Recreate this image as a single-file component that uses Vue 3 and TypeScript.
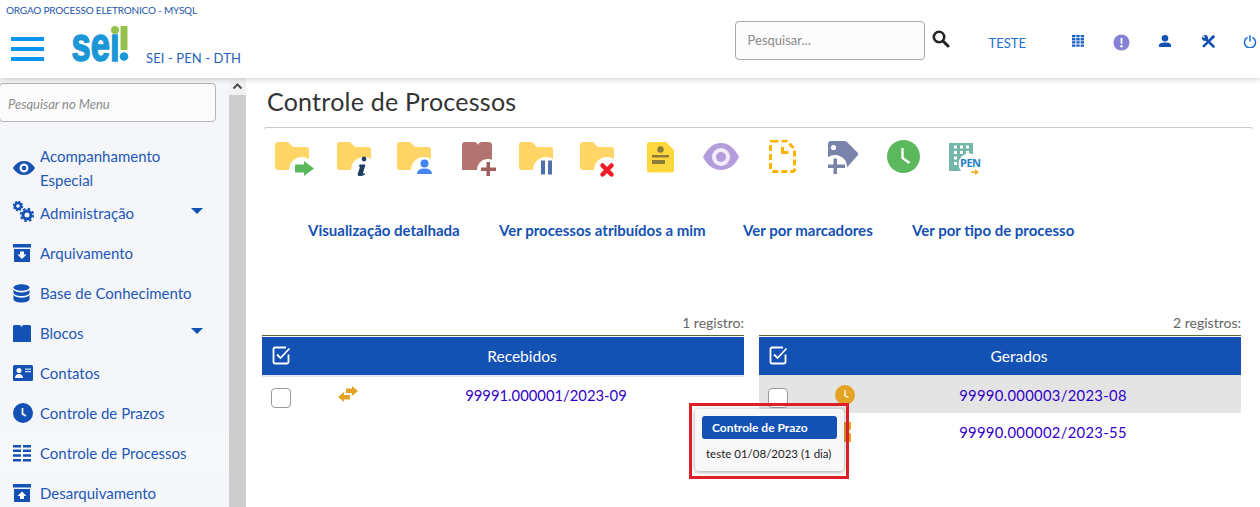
<script setup lang="ts">
interface MenuItem {
  label: string
  icon: string
  caret?: boolean
  active?: boolean
}

const menu: MenuItem[] = [
  { label: 'Administração', icon: 'gears', caret: true },
  { label: 'Arquivamento', icon: 'archive' },
  { label: 'Base de Conhecimento', icon: 'db' },
  { label: 'Blocos', icon: 'blocks', caret: true },
  { label: 'Contatos', icon: 'card' },
  { label: 'Controle de Prazos', icon: 'clock' },
  { label: 'Controle de Processos', icon: 'list', active: true },
  { label: 'Desarquivamento', icon: 'unarchive' }
]

const links = [
  { label: 'Visualização detalhada', width: 191 },
  { label: 'Ver processos atribuídos a mim', width: 244 },
  { label: 'Ver por marcadores', width: 169 },
  { label: 'Ver por tipo de processo', width: 200 }
]
</script>

<template>
  <div class="page">
    <header class="topbar">
      <div class="org">ORGAO PROCESSO ELETRONICO - MYSQL</div>
      <div class="bar">
        <button class="burger" aria-label="menu"><i /><i /><i /></button>
        <svg class="logo" width="58" height="44" viewBox="0 0 58 44">
          <text x="0.500" y="36.500" class="logo-text" textLength="48" lengthAdjust="spacingAndGlyphs">seı</text>
          <circle cx="44" cy="6" r="4" fill="#96c04c" />
          <rect x="49.500" y="2" width="7" height="24" fill="#96c04c" />
          <circle cx="53" cy="32.500" r="4.300" fill="#1b96d6" />
        </svg>
        <span class="sysname">SEI - PEN - DTH</span>

        <div class="tools">
          <div class="top-search">Pesquisar...</div>
          <svg class="lens" width="18" height="18" viewBox="0 0 18 18">
            <circle cx="7" cy="7" r="5.200" fill="none" stroke="#222" stroke-width="2.600" />
            <path d="M11 11l5 5" stroke="#222" stroke-width="3" stroke-linecap="round" />
          </svg>
          <span class="user">TESTE</span>
          <svg class="t1" width="12" height="12" viewBox="0 0 12 12">
            <path fill="#1a5fc4" d="M0 0h3.400v2.300H0zM4.300 0h3.400v2.300H4.300zM8.600 0H12v2.300H8.600zM0 3.100h3.400v2.300H0zM4.300 3.100h3.400v2.300H4.300zM8.600 3.100H12v2.300H8.600zM0 6.300h3.400v2.300H0zM4.300 6.300h3.400v2.300H4.300zM8.600 6.300H12v2.300H8.600zM0 9.400h3.400v2.300H0zM4.300 9.400h3.400v2.300H4.300zM8.600 9.400H12v2.300H8.600z" />
          </svg>
          <svg class="t2" width="17" height="17" viewBox="0 0 17 17">
            <circle cx="8.500" cy="8.500" r="8" fill="#8680d6" />
            <path d="M7.500 4h2l-.3 6H7.800z" fill="#fff" />
            <circle cx="8.500" cy="12.300" r="1.200" fill="#fff" />
          </svg>
          <svg class="t3" width="12" height="12" viewBox="0 0 12 12">
            <circle cx="6" cy="3.300" r="3.300" fill="#1351b4" />
            <path d="M0 12v-1.800C0 8.200 2.500 7.400 6 7.400s6 .8 6 2.800V12z" fill="#1351b4" />
          </svg>
          <svg class="t4" width="13" height="13" viewBox="0 0 13 13">
            <path d="M3 3l8.500 8.500" stroke="#1351b4" stroke-width="2.600" stroke-linecap="round" />
            <path d="M1.800 11.200L10 3" stroke="#1351b4" stroke-width="2.600" stroke-linecap="round" />
            <circle cx="3" cy="3" r="3" fill="#1351b4" />
            <path d="M1 0L3 2.200 2 3 0 1z" fill="#fff" />
            <path d="M9 1.500L11.500 0 13 1.500 11.500 4z" fill="#1351b4" />
          </svg>
          <svg class="t5" width="14" height="13" viewBox="0 0 14 13">
            <path d="M4 2.700a5.500 5.500 0 1 0 6 0" fill="none" stroke="#1a6fd4" stroke-width="1.500" stroke-linecap="round" />
            <path d="M7 .8v5.200" stroke="#1a6fd4" stroke-width="1.500" stroke-linecap="round" />
          </svg>
        </div>
      </div>
    </header>

    <div class="content">
      <aside class="side">
        <div class="side-search">Pesquisar no Menu</div>
        <nav class="nav">
          <a class="item first">
            <span class="ico">
              <svg width="22" height="16" viewBox="0 0 22 16">
                <path fill="#1351b4" fill-rule="evenodd" d="M11 1c5 0 9 3.500 11 7-2 3.500-6 7-11 7S2 11.500 0 8c2-3.500 6-7 11-7zm0 2.500a4.500 4.500 0 1 0 0 9 4.500 4.500 0 0 0 0-9zm0 2.300a2.200 2.200 0 1 1 0 4.400 2.200 2.200 0 0 1 0-4.400z" />
              </svg>
            </span>
            <span class="label">Acompanhamento Especial</span>
          </a>
          <a v-for="m in menu" :key="m.label" class="item" :class="{ active: m.active }">
            <span class="ico">
              <svg v-if="m.icon === 'gears'" class="gears" width="21" height="21" viewBox="0 0 21 21">
                <circle cx="5" cy="5" r="3" fill="none" stroke="#1351b4" stroke-width="2.400" />
                <circle cx="5" cy="5" r="4.500" fill="none" stroke="#1351b4" stroke-width="1.400" stroke-dasharray="2 1.500" />
                <circle cx="14" cy="14" r="4" fill="none" stroke="#1351b4" stroke-width="3" />
                <circle cx="14" cy="14" r="6.300" fill="none" stroke="#1351b4" stroke-width="1.800" stroke-dasharray="2.500 2.450" />
              </svg>
              <svg v-else-if="m.icon === 'archive'" width="18" height="18" viewBox="0 0 18 18">
                <path fill="#1351b4" d="M0 0h18v3.500H0zM1 5h16v13H1z" />
                <path fill="#fff" d="M7 7.500h4v3h2.500L9 15l-4.500-4.500H7z" />
              </svg>
              <svg v-else-if="m.icon === 'db'" width="17" height="19" viewBox="0 0 17 19">
                <ellipse cx="8.500" cy="3.500" rx="8" ry="3.200" fill="#1351b4" />
                <path fill="#1351b4" d="M.5 5.800c1.500 2 4.500 2.700 8 2.700s6.500-.7 8-2.700v3c0 1.800-3.500 3.200-8 3.200s-8-1.400-8-3.200zM.5 11c1.500 2 4.500 2.700 8 2.700s6.500-.7 8-2.700v4.300c0 1.800-3.500 3.200-8 3.200s-8-1.400-8-3.200z" />
              </svg>
              <svg v-else-if="m.icon === 'blocks'" width="18" height="17" viewBox="0 0 18 17">
                <path fill="#1351b4" d="M0 3V1.500Q0 0 1.500 0h4.500Q8 0 8.500 2 9 0 11 0h5.500Q18 0 18 1.500V17H0z" />
              </svg>
              <svg v-else-if="m.icon === 'card'" width="20" height="16" viewBox="0 0 20 16">
                <rect width="20" height="16" rx="1.500" fill="#1351b4" />
                <circle cx="6" cy="5.500" r="2.500" fill="#fff" />
                <path d="M2 13c0-2.500 1.800-4 4-4s4 1.500 4 4z" fill="#fff" />
                <path d="M12 3.500h6v1.300h-6zM12 6h6v1.300h-6z" fill="#cfe0f7" />
              </svg>
              <svg v-else-if="m.icon === 'clock'" width="20" height="20" viewBox="0 0 20 20">
                <circle cx="10" cy="10" r="10" fill="#1351b4" />
                <path d="M9.500 5v6l3.500 2" stroke="#fff" stroke-width="1.700" fill="none" />
              </svg>
              <svg v-else-if="m.icon === 'list'" width="18" height="17" viewBox="0 0 18 17">
                <path fill="#1351b4" d="M0 0h8v2.500H0zM10 0h8v2.500h-8zM0 4.600h8v2.500H0zM10 4.600h8v2.500h-8zM0 9.200h8v2.500H0zM10 9.200h8v2.500h-8zM0 14h8v2.500H0zM10 14h8v2.500h-8z" />
              </svg>
              <svg v-else width="18" height="18" viewBox="0 0 18 18">
                <path fill="#1351b4" d="M0 0h18v3.500H0zM1 5h16v13H1z" />
                <path fill="#fff" d="M9 7.500l4.500 4.500H11v3H7v-3H4.500z" />
              </svg>
            </span>
            <span class="label">{{ m.label }}</span>
            <span v-if="m.caret" class="caret" />
          </a>
        </nav>
      </aside>

      <div class="track">
        <div class="track-up">
          <svg width="11" height="7" viewBox="0 0 11 7">
            <path d="M1.500 5.500l4-4 4 4" fill="none" stroke="#505050" stroke-width="2" />
          </svg>
        </div>
      </div>

      <main class="main">
        <h1 class="title">Controle de Processos</h1>

        <section class="toolbar">
          <!-- each svg is as wide as the step to the next icon -->
          <svg width="62" height="40" viewBox="0 0 62 40">
            <path class="folder" d="M3 2h10l5 5h13a3 3 0 0 1 3 3v17a3 3 0 0 1-3 3H3a3 3 0 0 1-3-3V5a3 3 0 0 1 3-3z" />
            <circle cx="27" cy="30" r="13" fill="#fff" />
            <path fill="#5cb85c" d="M20 24.500h9V21l10 7.500L29 36v-3.500h-9z" />
          </svg>
          <svg width="60" height="40" viewBox="0 0 60 40">
            <path class="folder" d="M3 2h10l5 5h13a3 3 0 0 1 3 3v17a3 3 0 0 1-3 3H3a3 3 0 0 1-3-3V5a3 3 0 0 1 3-3z" />
            <circle cx="27" cy="30" r="13" fill="#fff" />
            <circle cx="27" cy="19" r="2.400" fill="#1c3f60" />
            <path d="M22.500 24.500h6l-2.500 8.500q0 1 2 .2v1.300q-3 2-6 1.500-2-.5-1-3l2-6h-1z" fill="#1c3f60" />
          </svg>
          <svg width="65" height="40" viewBox="0 0 65 40">
            <path class="folder" d="M3 2h10l5 5h13a3 3 0 0 1 3 3v17a3 3 0 0 1-3 3H3a3 3 0 0 1-3-3V5a3 3 0 0 1 3-3z" />
            <circle cx="27" cy="30" r="13" fill="#fff" />
            <circle cx="27.500" cy="23.500" r="4" fill="#4285f4" />
            <path d="M20 34q0-5.500 7.500-5.500T35 34z" fill="#4285f4" />
          </svg>
          <svg width="57" height="40" viewBox="0 0 57 40">
            <path fill="#b37370" d="M0 30V5q0-3 3-3h9q3 0 4 3 1-3 4-3h6q4 0 4 3v25z" />
            <circle cx="26" cy="30" r="11" fill="#fff" />
            <path d="M24.500 22H28v5.500h6V31h-6v5h-3.500v-5H19v-3.500h5.500z" fill="#a0605c" />
          </svg>
          <svg width="61" height="40" viewBox="0 0 61 40">
            <path class="folder" d="M3 2h10l5 5h13a3 3 0 0 1 3 3v17a3 3 0 0 1-3 3H3a3 3 0 0 1-3-3V5a3 3 0 0 1 3-3z" />
            <circle cx="27" cy="30" r="13" fill="#fff" />
            <path d="M22 20.500h4v14h-4zM29 20.500h4v14h-4z" fill="#4f72ac" />
          </svg>
          <svg width="67" height="40" viewBox="0 0 67 40">
            <path class="folder" d="M3 2h10l5 5h13a3 3 0 0 1 3 3v17a3 3 0 0 1-3 3H3a3 3 0 0 1-3-3V5a3 3 0 0 1 3-3z" />
            <circle cx="27" cy="30" r="13" fill="#fff" />
            <path d="M22.500 25.500l9 9M31.500 25.500l-9 9" stroke="#ee1c25" stroke-width="4.500" stroke-linecap="round" />
          </svg>
          <svg width="56" height="40" viewBox="0 0 56 40">
            <path d="M2.500 2H19l8 8v20a2.500 2.500 0 0 1-2.500 2.500h-22A2.500 2.500 0 0 1 0 30V4.500A2.500 2.500 0 0 1 2.500 2z" fill="#ffd83e" />
            <circle cx="13.500" cy="9.500" r="3.200" fill="#8c7c3c" />
            <path d="M5 15h17v2.500H5zM5 20h13v4H5z" fill="#8c7c3c" />
          </svg>
          <svg width="66" height="40" viewBox="0 0 66 40">
            <path fill="#b39ddb" d="M18 3c8 0 14 6 18 14-4 8-10 13-18 13S4 25 0 17C4 9 10 3 18 3z" />
            <circle cx="18" cy="17" r="9" fill="#f2edf8" />
            <circle cx="18" cy="17" r="5" fill="#b39ddb" />
          </svg>
          <svg width="59" height="40" viewBox="0 0 59 40">
            <path d="M3.500 1H18L25.500 9v20.500a2 2 0 0 1-2 2h-20a2 2 0 0 1-2-2V3a2 2 0 0 1 2-2z" fill="none" stroke="#ffb300" stroke-width="3" stroke-dasharray="6 3" />
            <path d="M13.500 7v5.500h6" fill="none" stroke="#ffb300" stroke-width="3" />
          </svg>
          <svg width="59" height="40" viewBox="0 0 59 40">
            <path fill="#7a83a9" d="M3 1h13q2 0 3 1l10.500 10.500q1.500 1.500 0 3L16 31H5l-5-5V4q0-3 3-3z" />
            <circle cx="5.500" cy="7.500" r="2.600" fill="#fff" />
            <circle cx="7" cy="27" r="12" fill="#fff" />
            <path d="M5.500 18.500h3.500v6h8V28H9v6H5.500v-6H0v-3.500h5.500z" fill="#7a83a9" />
          </svg>
          <svg width="62" height="40" viewBox="0 0 62 40">
            <circle cx="16.500" cy="16.500" r="16.500" fill="#5cb85c" />
            <path d="M15.500 8v10l7 5" fill="none" stroke="#fff" stroke-width="2.400" />
          </svg>
          <svg width="40" height="40" viewBox="0 0 40 40">
            <path fill="#74b8a9" d="M0 3h24v28H0z" />
            <path fill="#fff" d="M5 5.500h3v3H5zM11 5.500h3v3h-3zM17 5.500h3v3h-3zM5 11h3v3H5zM11 11h3v3h-3zM17 11h3v3h-3zM5 16.500h3v3H5zM5 22h3v3H5z" />
            <circle cx="20" cy="24" r="10.500" fill="#fff" />
            <text x="11" y="27" class="pen">PEN</text>
            <path d="M22 31.500h4V29l4 3.500-4 2.500v-2h-4z" fill="#f5a623" />
          </svg>
        </section>

        <nav class="links">
          <a v-for="l in links" :key="l.label" :style="{ width: l.width + 'px' }">{{ l.label }}</a>
        </nav>

        <div class="tables">
          <section class="panel">
            <div class="count">1 registro:</div>
            <div class="thead">
              <svg width="19" height="19" viewBox="0 0 19 19">
                <path d="M16.500 8.500v7.500a1.500 1.500 0 0 1-1.500 1.500H3A1.500 1.500 0 0 1 1.500 16V3A1.500 1.500 0 0 1 3 1.500h11" fill="none" stroke="#fff" stroke-width="1.800" />
                <path d="M5 8.500l3.500 3.500L17.500 2.500" fill="none" stroke="#fff" stroke-width="1.800" />
              </svg>
              <span>Recebidos</span>
            </div>
            <div class="row top">
              <span class="check" />
              <svg class="flag" width="20" height="18" viewBox="0 0 20 18">
                <path fill="#e5a326" d="M8 2.500h6V0l6 5-6 5V7H8zM12 9H6V6L0 11l6 5v-2.500h6z" />
              </svg>
              <a class="num">99991.000001/2023-09</a>
            </div>
          </section>

          <section class="panel generated">
            <div class="count">2 registros:</div>
            <div class="thead">
              <svg width="19" height="19" viewBox="0 0 19 19">
                <path d="M16.500 8.500v7.500a1.500 1.500 0 0 1-1.500 1.500H3A1.500 1.500 0 0 1 1.500 16V3A1.500 1.500 0 0 1 3 1.500h11" fill="none" stroke="#fff" stroke-width="1.800" />
                <path d="M5 8.500l3.500 3.500L17.500 2.500" fill="none" stroke="#fff" stroke-width="1.800" />
              </svg>
              <span>Gerados</span>
            </div>
            <div class="row top shaded">
              <span class="check" />
              <svg class="flag" width="20" height="20" viewBox="0 0 20 20">
                <circle cx="10" cy="10" r="10" fill="#e5a326" />
                <path d="M10 5v5.500l3.500 2" stroke="#fff" stroke-width="1.300" fill="none" />
              </svg>
              <a class="num">99990.000003/2023-08</a>
            </div>
            <div class="row">
              <span class="check" />
              <svg class="flag" width="20" height="20" viewBox="0 0 20 20">
                <path fill="#e5a326" d="M8 0h8v7l-3 2.500 3 2.500v8H8z" />
              </svg>
              <a class="num">99990.000002/2023-55</a>
            </div>
          </section>
        </div>

        <div class="callout">
          <div class="pop">
            <div class="pop-head">Controle de Prazo</div>
            <div class="pop-body">teste 01/08/2023 (1 dia)</div>
          </div>
        </div>
      </main>
    </div>
  </div>
</template>

<style>
html,
body {
  margin: 0;
  overflow: hidden;
  background: #fff;
}
</style>

<style scoped>
.page {
  width: 1260px;
  height: 507px;
  overflow: hidden;
  font-family: Lato, "Noto Sans", sans-serif;
  color: #1351b4;
  display: flex;
  flex-direction: column;
}
.topbar {
  height: 78px;
  flex: none;
  background: #fff;
  box-shadow: 0 1px 6px rgba(0, 0, 0, 0.2);
  position: relative;
  z-index: 2;
}
.org {
  padding: 4px 0 0 6px;
  font-size: 10px;
  line-height: 12px;
  letter-spacing: -0.19px;
  color: #1d55a8;
}
.bar {
  display: flex;
  align-items: flex-start;
  height: 62px;
}
.burger {
  border: 0;
  padding: 0;
  background: none;
  margin: 21px 0 0 11px;
  width: 33px;
  display: flex;
  flex-direction: column;
  gap: 6px;
}
.burger i {
  display: block;
  height: 4px;
  background: #0a96f0;
}
.logo {
  margin: 8px 0 0 27px;
  overflow: visible;
}
.logo-text {
  font-family: "Liberation Sans", sans-serif;
  font-weight: 700;
  font-size: 48px;
  fill: #1b96d6;
  stroke: #1b96d6;
  stroke-width: 1.600px;
}
.sysname {
  margin: 34px 0 0 17px;
  font-size: 13px;
  line-height: 16px;
  letter-spacing: 0.1px;
  color: #2563b8;
}
.tools {
  margin-left: auto;
  display: flex;
  align-items: flex-start;
}
.top-search {
  width: 176px;
  height: 37px;
  margin-top: 5px;
  padding-left: 12px;
  line-height: 37px;
  border: 1px solid #a8a8a8;
  border-radius: 4px;
  background: #fcfcfc;
  color: #8a8a8a;
  font-size: 13px;
}
.lens {
  margin: 14px 0 0 7px;
}
.user {
  margin: 19px 0 0 39px;
  font-size: 13px;
  line-height: 16px;
  color: #1f6fd0;
}
.t1 {
  margin: 19px 0 0 46px;
}
.t2 {
  margin: 18px 0 0 29px;
}
.t3 {
  margin: 19px 0 0 29px;
}
.t4 {
  margin: 19px 0 0 31px;
}
.t5 {
  margin: 19px 3px 0 28px;
}
.content {
  flex: 1;
  display: flex;
  min-height: 0;
}
.side {
  width: 229px;
  flex: none;
  background: #f4f6f9;
  padding-top: 5px;
  box-sizing: border-box;
}
.side-search {
  width: 217px;
  height: 39px;
  margin-left: -1px;
  padding-left: 8px;
  box-sizing: border-box;
  line-height: 41px;
  border: 1px solid #b4b4b4;
  border-radius: 4px;
  background: #fbfbfb;
  color: #8c8c8c;
  font-size: 13px;
  font-style: italic;
}
.nav {
  margin-top: 22px;
}
.item {
  display: flex;
  align-items: center;
  height: 40px;
  padding-left: 13px;
  font-size: 15px;
  color: #1f58b4;
}
.item.first {
  height: 48px;
  margin-bottom: 1px;
  line-height: 24px;
}
.item.active {
  background: #f7f8fa;
}
.ico {
  width: 22px;
  flex: none;
  margin-right: 5px;
  display: flex;
  align-items: center;
}
.gears {
  margin: -4px 0 0 0;
}
.label {
  flex: 1;
  white-space: nowrap;
}
.first .label {
  flex: none;
  width: 130px;
  white-space: normal;
}
.caret {
  margin: -4px 26px 0 0;
  border-left: 6px solid transparent;
  border-right: 6px solid transparent;
  border-top: 6px solid #1351b4;
}
.track {
  width: 17px;
  flex: none;
  background: #cdcdcd;
}
.track-up {
  height: 17px;
  background: #f1f1f1;
  display: flex;
  align-items: center;
  justify-content: center;
}
.main {
  flex: 1;
  position: relative;
  padding-left: 16px;
  min-width: 0;
}
.title {
  margin: 8px 0 0 5px;
  font-size: 25px;
  line-height: 30px;
  font-weight: 400;
  letter-spacing: 0.24px;
  color: #333;
}
.toolbar {
  margin-top: 11px;
  width: 993px;
  height: 60px;
  box-sizing: border-box;
  padding: 12px 0 0 12px;
  border-top: 1px solid #ccc;
  border-left: 1px solid transparent;
  border-right: 1px solid transparent;
  border-radius: 5px 5px 0 0;
  display: flex;
}
.folder {
  fill: #ffd666;
}
.pen {
  font-family: "Open Sans", sans-serif;
  font-weight: 700;
  font-size: 11px;
  letter-spacing: -0.5px;
  fill: #2080c0;
}
.links {
  display: flex;
  margin: 33px 0 0 46px;
  font-size: 15px;
  line-height: 20px;
  font-weight: 700;
  color: #1351b4;
}
.links a {
  display: block;
  white-space: nowrap;
}
.tables {
  display: flex;
  gap: 15px;
  margin-top: 73px;
}
.panel {
  width: 482px;
}
.count {
  text-align: right;
  font-size: 14px;
  line-height: 20px;
  color: #666;
  margin-bottom: 2px;
}
.thead {
  display: grid;
  grid-template-columns: 38px 1fr;
  align-items: center;
  height: 40px;
  padding-left: 10px;
  box-sizing: border-box;
  background: #1351b4;
  border-top: 1px solid #556b2f;
  box-shadow: inset 0 1px 0 #fff;
  color: #fff;
  font-size: 15.500px;
  text-align: center;
}
.thead span {
  margin-left: -10px;
}
.row {
  display: grid;
  grid-template-columns: 68px 68px 1fr 50px;
  align-items: center;
  height: 37px;
  box-sizing: border-box;
}
.row.top {
  height: 38px;
  border-top: 2px solid #dfe6ee;
}
.row.shaded {
  background: #e4e4e4;
  border-top-color: transparent;
}
.check {
  width: 18px;
  height: 18px;
  margin: 6px 0 0 9px;
  background: #fff;
  border: 1px solid #9a9a9a;
  border-radius: 4px;
}
.flag {
  margin-left: 8px;
}
.num {
  text-align: center;
  font-size: 14.800px;
  color: #3300cc;
}
.generated .num {
  letter-spacing: 0.3px;
}
.callout {
  position: absolute;
  left: 443px;
  top: 325px;
  width: 160px;
  height: 76px;
  box-sizing: border-box;
  border: 3px solid #df1f26;
  padding: 3px;
}
.pop {
  width: 149px;
  height: 62px;
  box-sizing: border-box;
  padding: 7px;
  background: #f8f8f8;
  border-radius: 4px;
  box-shadow: 0 1px 4px rgba(0, 0, 0, 0.4);
}
.pop-head {
  width: 135px;
  height: 23px;
  box-sizing: border-box;
  padding-left: 10px;
  line-height: 23px;
  border-radius: 3px;
  background: #1351b4;
  color: #fff;
  font-size: 12px;
  font-weight: 700;
}
.pop-body {
  margin-top: 7px;
  font-size: 11.500px;
  line-height: 15px;
  color: #222;
  padding-left: 4px;
  white-space: nowrap;
}
</style>
